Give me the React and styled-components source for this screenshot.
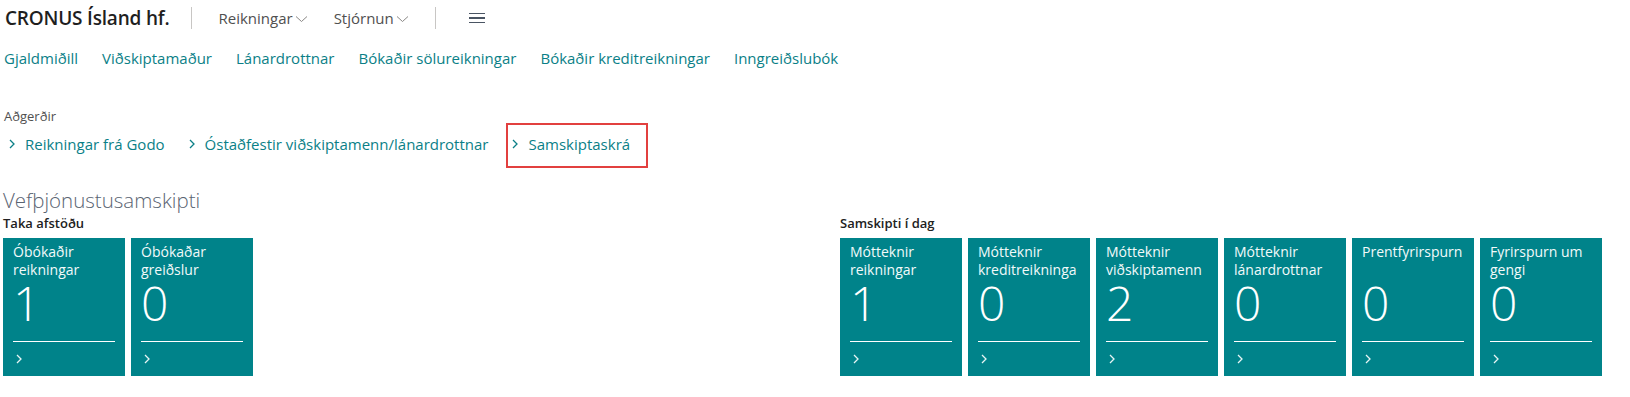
import React from 'react'
import styled, { createGlobalStyle } from 'styled-components'

const GlobalStyle = createGlobalStyle`
  body {
    margin: 0;
    background: #fff;
    font-family: "Open Sans", "Noto Sans", sans-serif;
    color: #212121;
  }
`

const navLinks = [
  'Gjaldmiðill',
  'Viðskiptamaður',
  'Lánardrottnar',
  'Bókaðir sölureikningar',
  'Bókaðir kreditreikningar',
  'Inngreiðslubók',
]

const actions = [
  { label: 'Reikningar frá Godo' },
  { label: 'Óstaðfestir viðskiptamenn/lánardrottnar' },
  { label: 'Samskiptaskrá', marked: true },
]

const groups = [
  {
    title: 'Taka afstöðu',
    tiles: [
      { title: 'Óbókaðir reikningar', value: 1 },
      { title: 'Óbókaðar greiðslur', value: 0 },
    ],
  },
  {
    title: 'Samskipti í dag',
    tiles: [
      { title: 'Mótteknir reikningar', value: 1 },
      { title: 'Mótteknir kreditreikninga', value: 0 },
      { title: 'Mótteknir viðskiptamenn', value: 2 },
      { title: 'Mótteknir lánardrottnar', value: 0 },
      { title: 'Prentfyrirspurn', value: 0 },
      { title: 'Fyrirspurn um gengi', value: 0 },
    ],
  },
]

function ChevronDown() {
  return (
    <svg width="13" height="8" viewBox="0 0 13 8">
      <path d="M1 1.5 L6.5 6.5 L12 1.5" fill="none" stroke="#8a8886" strokeWidth="1" />
    </svg>
  )
}

function ChevronRight({ color, w = 6, h = 10 }) {
  return (
    <svg width={w} height={h} viewBox="0 0 6 10">
      <path d="M1 1 L5 5 L1 9" fill="none" stroke={color} strokeWidth="1.3" />
    </svg>
  )
}

function App() {
  return (
    <Page>
      <GlobalStyle />
      <TopBar>
        <Company>CRONUS Ísland hf.</Company>
        <Divider $before={22} $after={26} />
        <MenuItem>Reikningar<ChevronDown /></MenuItem>
        <MenuItem>Stjórnun<ChevronDown /></MenuItem>
        <Divider $before={0} $after={33} />
        <Hamburger>
          <span />
          <span />
          <span />
        </Hamburger>
      </TopBar>

      <NavRow>
        {navLinks.map(link => (
          <NavLink key={link}>{link}</NavLink>
        ))}
      </NavRow>

      <ActionsLabel>Aðgerðir</ActionsLabel>
      <ActionRow>
        {actions.map(a => (
          <Action key={a.label} $marked={a.marked}>
            <ChevronRight color="#0b7f87" />
            {a.label}
          </Action>
        ))}
      </ActionRow>

      <SectionTitle>Vefþjónustusamskipti</SectionTitle>
      <Groups>
        {groups.map(g => (
          <Group key={g.title}>
            <GroupTitle>{g.title}</GroupTitle>
            <TileRow>
              {g.tiles.map(t => (
                <Tile key={t.title}>
                  <TileTitle>{t.title}</TileTitle>
                  <TileValue>{t.value}</TileValue>
                  <TileFooter>
                    <ChevronRight color="#e6f4f4" w={6} h={10} />
                  </TileFooter>
                </Tile>
              ))}
            </TileRow>
          </Group>
        ))}
      </Groups>
    </Page>
  )
}

export default App

const Page = styled.div`
  width: 1630px;
  height: 397px;
  padding-left: 3px;
  box-sizing: border-box;
  overflow: hidden;
`

const TopBar = styled.div`
  display: flex;
  align-items: center;
  height: 36px;
`

const Company = styled.div`
  margin-left: 2px;
  font-size: 19px;
  font-weight: 600;
  color: #1f1f1f;
  letter-spacing: -0.2px;
`

const Divider = styled.div`
  width: 1px;
  height: 22px;
  background: #c8c6c4;
  margin: 0 ${props => props.$after}px 0 ${props => props.$before}px;
`

const MenuItem = styled.div`
  display: flex;
  align-items: center;
  gap: 2px;
  margin-right: 26px;
  font-size: 15px;
  color: #505050;
  svg {
    margin-top: 2px;
  }
`

const Hamburger = styled.div`
  display: flex;
  flex-direction: column;
  gap: 3px;
  width: 16px;
  span {
    display: block;
    height: 1.5px;
    background: #4a5563;
  }
`

const NavRow = styled.div`
  display: flex;
  gap: 24px;
  margin-top: 8px;
  padding-left: 1px;
  height: 28px;
  align-items: center;
`

const NavLink = styled.a`
  font-size: 15px;
  color: #0b7f87;
  cursor: pointer;
`

const ActionsLabel = styled.div`
  margin-top: 37px;
  padding-left: 1px;
  font-size: 13px;
  line-height: 14px;
  color: #505050;
`

const ActionRow = styled.div`
  display: flex;
  height: 45px;
`

const Action = styled.div`
  display: flex;
  align-items: center;
  gap: 10px;
  padding: 0 16px 3px 4px;
  font-size: 15px;
  color: #0b7f87;
  border: 2px solid ${props => (props.$marked ? '#e2403f' : 'transparent')};
  box-sizing: border-box;
`

const SectionTitle = styled.div`
  margin-top: 20px;
  font-size: 20.5px;
  font-weight: 300;
  line-height: 24px;
  color: #5a6472;
`

const Groups = styled.div`
  display: grid;
  grid-template-columns: 837px auto;
`

const Group = styled.div`
  display: flex;
  flex-direction: column;
`

const GroupTitle = styled.div`
  margin-top: 3px;
  font-size: 13px;
  font-weight: 600;
  line-height: 16px;
  color: #212121;
`

const TileRow = styled.div`
  display: flex;
  gap: 6px;
  margin-top: 7px;
`

const Tile = styled.div`
  width: 122px;
  height: 138px;
  box-sizing: border-box;
  padding: 5px 10px 0;
  background: #00838a;
  color: #fff;
  display: flex;
  flex-direction: column;
`

const TileTitle = styled.div`
  font-size: 14px;
  line-height: 18px;
  height: 36px;
  color: #f2fafa;
`

const TileValue = styled.div`
  font-size: 48px;
  font-weight: 300;
  line-height: 48px;
  height: 48px;
  padding-bottom: 14px;
  border-bottom: 1px solid #ffffff;
`

const TileFooter = styled.div`
  display: flex;
  align-items: center;
  height: 34px;
  padding-left: 3px;
`
